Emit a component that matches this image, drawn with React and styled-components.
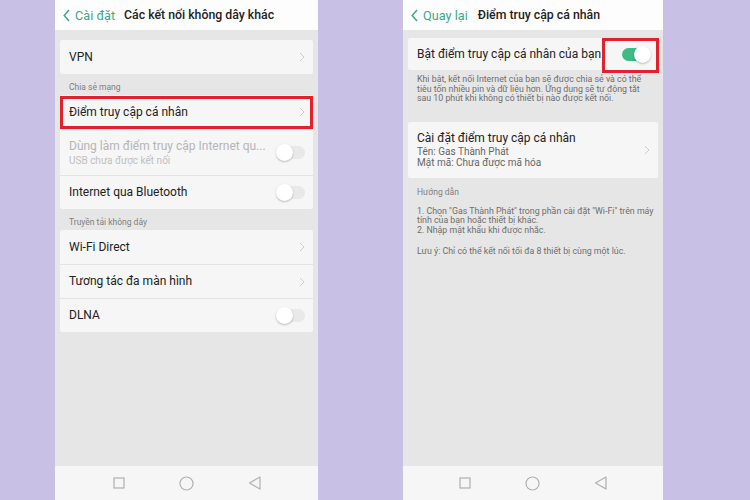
import React from 'react';
import styled, { createGlobalStyle } from 'styled-components';

const Global = createGlobalStyle`
  html, body { margin: 0; padding: 0; }
  body {
    background: #c9c0e6;
    font-family: Roboto, "Noto Sans", "Liberation Sans", sans-serif;
  }
`;

const Page = styled.div`
  width: 750px;
  height: 500px;
  display: flex;
  align-items: stretch;
`;

const Phone = styled.div`
  margin-left: ${p => p.$left}px;
  width: ${p => p.$width}px;
  height: 500px;
  background: #e6e6e6;
  display: flex;
  flex-direction: column;
`;

const Header = styled.div`
  height: 30px;
  background: #fdfdfd;
  display: flex;
  align-items: center;
  padding-left: 8px;
  flex-shrink: 0;
`;

const Back = styled.span`
  display: flex;
  align-items: center;
  gap: 5px;
  color: #3aa88a;
  font-size: 12.7px;
  margin-right: ${p => p.$gap}px;
`;

const Title = styled.span`
  color: #222;
  font-size: 12.3px;
  font-weight: 500;
`;

const Body = styled.div`
  flex: 1;
  padding: ${p => p.$pad};
  display: flex;
  flex-direction: column;
`;

const Card = styled.div`
  background: #f6f6f6;
  border-radius: 2px;
`;

const Row = styled.div`
  position: relative;
  display: flex;
  align-items: center;
  justify-content: space-between;
  min-height: ${p => p.$h || 34}px;
  padding: 0 8px 0 9px;
  box-sizing: border-box;
  border-top: ${p => (p.$first ? 'none' : '1px solid #e4e4e4')};
`;

const RowText = styled.div`
  display: flex;
  flex-direction: column;
  min-width: 0;
`;

const Label = styled.div`
  font-size: 12px;
  line-height: 15px;
  color: ${p => (p.$dim ? '#b5b5b5' : '#222')};
  white-space: nowrap;
  overflow: hidden;
`;

const Sub = styled.div`
  font-size: 10px;
  line-height: 11.5px;
  color: ${p => (p.$dim ? '#c0c0c0' : '#666')};
  margin-top: ${p => (p.$dim ? 1 : 0)}px;
`;

const Section = styled.div`
  font-size: 8.5px;
  line-height: 10px;
  color: #808080;
  padding: ${p => p.$pad || '8px 9px 3px'};
`;

const Note = styled.div`
  font-size: 8.8px;
  line-height: 9.6px;
  color: #6e6e6e;
  white-space: nowrap;
  padding: ${p => p.$pad};
`;

const Highlight = styled.div`
  position: absolute;
  inset: ${p => p.$inset};
  border: 3.5px solid #e1212b;
  pointer-events: none;
`;

const Switch = styled.div`
  position: relative;
  width: 28px;
  height: 13px;
  border-radius: 7px;
  background: ${p => (p.$on ? '#3dba86' : '#e9e9e9')};
  flex-shrink: 0;
  &::after {
    content: '';
    position: absolute;
    top: -2px;
    ${p => (p.$on ? 'right: -1px;' : 'left: -1px;')}
    width: 17px;
    height: 17px;
    border-radius: 50%;
    background: #fff;
    box-shadow: 0 1px 2px rgba(0,0,0,0.25);
  }
`;

const NavBar = styled.div`
  height: 34px;
  background: #f6f6f6;
  display: flex;
  align-items: center;
  justify-content: center;
  gap: ${p => p.$gap}px;
  flex-shrink: 0;
`;

const Chevron = () => (
  <svg width="6" height="10" viewBox="0 0 6 10">
    <path d="M1 1l4 4-4 4" fill="none" stroke="#cdcdcd" strokeWidth="1" />
  </svg>
);

const BackIcon = () => (
  <svg width="7" height="13" viewBox="0 0 7 13">
    <path d="M6 1L1.2 6.5 6 12" fill="none" stroke="#3aa88a" strokeWidth="1.5" />
  </svg>
);

const Nav = ({ gap }) => (
  <NavBar $gap={gap}>
    <svg width="12" height="12" viewBox="0 0 12 12">
      <rect x="1" y="1" width="10" height="10" fill="none" stroke="#b0b0b0" strokeWidth="1.2" />
    </svg>
    <svg width="15" height="15" viewBox="0 0 15 15">
      <circle cx="7.5" cy="7.5" r="6.5" fill="none" stroke="#b0b0b0" strokeWidth="1.2" />
    </svg>
    <svg width="13" height="14" viewBox="0 0 13 14">
      <path d="M12 1L1.5 7 12 13z" fill="none" stroke="#b0b0b0" strokeWidth="1.2" strokeLinejoin="round" />
    </svg>
  </NavBar>
);

function LeftScreen() {
  return (
    <Phone $left={55} $width={263}>
      <Header>
        <Back $gap={9}><BackIcon />Cài đặt</Back>
        <Title>Các kết nối không dây khác</Title>
      </Header>
      <Body $pad="10px 5px 0 5px">
        <Card>
          <Row $first><Label>VPN</Label><Chevron /></Row>
        </Card>
        <Section>Chia sẻ mạng</Section>
        <Card>
          <Row $first>
            <Label>Điểm truy cập cá nhân</Label><Chevron />
            <Highlight $inset="1px 0 0 0" />
          </Row>
          <Row $h={46}>
            <RowText>
              <Label $dim>Dùng làm điểm truy cập Internet qu...</Label>
              <Sub $dim>USB chưa được kết nối</Sub>
            </RowText>
            <Switch />
          </Row>
          <Row><Label>Internet qua Bluetooth</Label><Switch /></Row>
        </Card>
        <Section>Truyền tải không dây</Section>
        <Card>
          <Row $first><Label>Wi-Fi Direct</Label><Chevron /></Row>
          <Row><Label>Tương tác đa màn hình</Label><Chevron /></Row>
          <Row><Label>DLNA</Label><Switch /></Row>
        </Card>
      </Body>
      <Nav gap={54} />
    </Phone>
  );
}

function RightScreen() {
  return (
    <Phone $left={85} $width={260}>
      <Header>
        <Back $gap={10}><BackIcon />Quay lại</Back>
        <Title>Điểm truy cập cá nhân</Title>
      </Header>
      <Body $pad="8px 5px 0 5px">
        <Card>
          <Row $first $h={32}>
            <Label>Bật điểm truy cập cá nhân của bạn</Label>
            <Switch $on />
            <Highlight $inset="0 -1px -3px auto" style={{ width: 51 }} />
          </Row>
        </Card>
        <Note $pad="5px 9px 18px">
          Khi bật, kết nối Internet của bạn sẽ được chia sẻ và có thể<br />
          tiêu tốn nhiều pin và dữ liệu hơn. Ứng dụng sẽ tự động tắt<br />
          sau 10 phút khi không có thiết bị nào được kết nối.
        </Note>
        <Card>
          <Row $first $h={56}>
            <RowText>
              <Label>Cài đặt điểm truy cập cá nhân</Label>
              <Sub>Tên: Gas Thành Phát</Sub>
              <Sub>Mật mã: Chưa được mã hóa</Sub>
            </RowText>
            <Chevron />
          </Row>
        </Card>
        <Section $pad="9px 9px 10px">Hướng dẫn</Section>
        <Note $pad="0 9px 11px">
          1. Chọn "Gas Thành Phát" trong phần cài đặt "Wi-Fi" trên máy<br />
          tính của bạn hoặc thiết bị khác.<br />
          2. Nhập mật khẩu khi được nhắc.
        </Note>
        <Note $pad="0 9px">Lưu ý: Chỉ có thể kết nối tối đa 8 thiết bị cùng một lúc.</Note>
      </Body>
      <Nav gap={54} />
    </Phone>
  );
}

export default function App() {
  return (
    <>
      <Global />
      <Page>
        <LeftScreen />
        <RightScreen />
      </Page>
    </>
  );
}
